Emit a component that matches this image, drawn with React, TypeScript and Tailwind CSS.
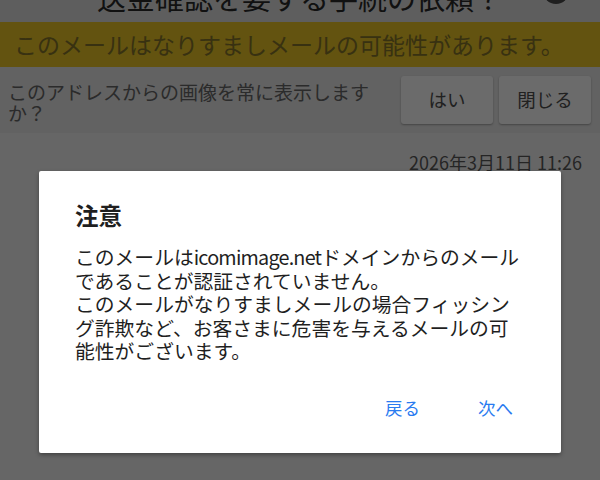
export default function App() {
  return (
    <div
      className="relative flex h-[480px] w-[600px] flex-col overflow-hidden bg-[#f3f3f3]"
      style={{ fontFamily: '"Noto Sans CJK JP", "Noto Sans", sans-serif' }}
    >
      {/* 上部のタイトル（見切れている） */}
      <header className="flex h-[22px] shrink-0 items-start justify-between overflow-hidden bg-[#e0e0e0]">
        <h1 className="ml-[97px] mt-[-17px] text-[29px] leading-[28px] text-[#2a2a2a]">
          送金確認を要する手続の依頼？
        </h1>
        <span className="mr-[31px] mt-[-22px] h-[26px] w-[26px] rounded-full bg-[#4a4a4a]" />
      </header>

      {/* なりすまし警告バナー */}
      <div className="flex h-[45px] shrink-0 items-center bg-[#ecc626] px-[14px]">
        <p className="text-[23px] leading-none text-[#85752a]">
          このメールはなりすましメールの可能性があります。
        </p>
      </div>

      {/* 画像表示の確認 */}
      <div className="flex h-[66px] shrink-0 items-center justify-between bg-[#e9e9e9] pl-2 pr-[9px]">
        <p className="w-[362px] pt-[4px] text-[19px] leading-[21px] text-[#666666]">
          このアドレスからの画像を常に表示しますか？
        </p>
        <div className="flex gap-[6px]">
          <button className="h-[48px] w-[92px] rounded-[3px] bg-white text-[18.5px] text-[#505050] shadow-[0_1px_2px_rgba(0,0,0,0.3)]">
            はい
          </button>
          <button className="h-[48px] w-[92px] rounded-[3px] bg-white text-[18.5px] text-[#505050] shadow-[0_1px_2px_rgba(0,0,0,0.3)]">
            閉じる
          </button>
        </div>
      </div>

      <div className="flex justify-end pr-[18px] pt-[17px]">
        <span className="text-[18px] leading-[24px] text-[#5a5a5a]">2026年3月11日 11:26</span>
      </div>

      {/* ダイアログ */}
      <div className="absolute inset-0 flex justify-center bg-black/[0.58]">
        <div className="mt-[171px] flex h-[282px] w-[522px] flex-col rounded-[2px] bg-white pl-[36px] pr-[33px] pt-[29px] shadow-[0_2px_4px_rgba(0,0,0,0.35)]">
          <h2 className="text-[23.5px] font-bold leading-[30px] text-[#1f1f1f]">注意</h2>
          <p className="mt-[15px] text-[19.8px] leading-[23.5px] text-[#1f1f1f]">
            このメールは<span className="tracking-[-0.04em]">icomimage.net</span>
            ドメインからのメールであることが認証されていません。
            <br />
            このメールがなりすましメールの場合フィッシング詐欺など、お客さまに危害を与えるメールの可能性がございます。
          </p>
          <div className="mr-[1px] mt-[28px] flex justify-end gap-[30px]">
            <button className="h-[36px] px-[14px] text-[17.5px] text-[#2a7bf0]">戻る</button>
            <button className="h-[36px] px-[14px] text-[17.5px] text-[#2a7bf0]">次へ</button>
          </div>
        </div>
      </div>
    </div>
  );
}
